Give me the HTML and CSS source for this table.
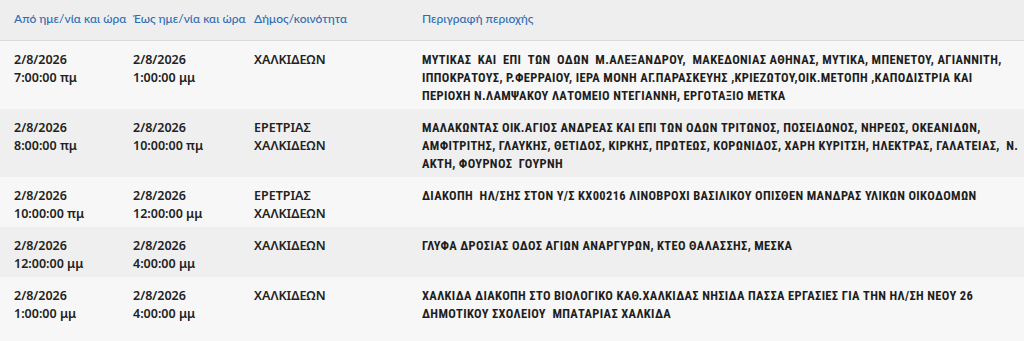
FILE: index.html
```html
<!DOCTYPE html>
<html lang="el">
<head>
<meta charset="utf-8">
<link rel="stylesheet" href="styles.css">
</head>
<body>
<div class="outages">
  <div class="row head">
    <div class="cell">Από ημε/νία και ώρα</div>
    <div class="cell">Έως ημε/νία και ώρα</div>
    <div class="cell">Δήμος/κοινότητα</div>
    <div class="cell">Περιγραφή περιοχής</div>
  </div>
  <div class="row odd">
    <div class="cell dt">2/8/2026<br>7:00:00 πμ</div>
    <div class="cell dt">2/8/2026<br>1:00:00 μμ</div>
    <div class="cell muni">ΧΑΛΚΙΔΕΩΝ</div>
    <div class="cell desc">ΜΥΤΙΚΑΣ&nbsp; ΚΑΙ&nbsp; ΕΠΙ&nbsp; ΤΩΝ&nbsp; ΟΔΩΝ&nbsp; Μ.ΑΛΕΞΑΝΔΡΟΥ,&nbsp; ΜΑΚΕΔΟΝΙΑΣ ΑΘΗΝΑΣ, ΜΥΤΙΚΑ, ΜΠΕΝΕΤΟΥ, ΑΓΙΑΝΝΙΤΗ, ΙΠΠΟΚΡΑΤΟΥΣ, Ρ.ΦΕΡΡΑΙΟΥ, ΙΕΡΑ ΜΟΝΗ ΑΓ.ΠΑΡΑΣΚΕΥΗΣ ,ΚΡΙΕΖΩΤΟΥ,ΟΙΚ.ΜΕΤΟΠΗ ,ΚΑΠΟΔΙΣΤΡΙΑ ΚΑΙ ΠΕΡΙΟΧΗ Ν.ΛΑΜΨΑΚΟΥ ΛΑΤΟΜΕΙΟ ΝΤΕΓΙΑΝΝΗ, ΕΡΓΟΤΑΞΙΟ ΜΕΤΚΑ</div>
  </div>
  <div class="row even">
    <div class="cell dt">2/8/2026<br>8:00:00 πμ</div>
    <div class="cell dt">2/8/2026<br>10:00:00 πμ</div>
    <div class="cell muni">ΕΡΕΤΡΙΑΣ<br>ΧΑΛΚΙΔΕΩΝ</div>
    <div class="cell desc">ΜΑΛΑΚΩΝΤΑΣ ΟΙΚ.ΑΓΙΟΣ ΑΝΔΡΕΑΣ ΚΑΙ ΕΠΙ ΤΩΝ ΟΔΩΝ ΤΡΙΤΩΝΟΣ, ΠΟΣΕΙΔΩΝΟΣ, ΝΗΡΕΩΣ, ΟΚΕΑΝΙΔΩΝ, ΑΜΦΙΤΡΙΤΗΣ, ΓΛΑΥΚΗΣ, ΘΕΤΙΔΟΣ, ΚΙΡΚΗΣ, ΠΡΩΤΕΩΣ, ΚΟΡΩΝΙΔΟΣ, ΧΑΡΗ ΚΥΡΙΤΣΗ, ΗΛΕΚΤΡΑΣ, ΓΑΛΑΤΕΙΑΣ,&nbsp; Ν. ΑΚΤΗ, ΦΟΥΡΝΟΣ&nbsp; ΓΟΥΡΝΗ</div>
  </div>
  <div class="row odd">
    <div class="cell dt">2/8/2026<br>10:00:00 πμ</div>
    <div class="cell dt">2/8/2026<br>12:00:00 μμ</div>
    <div class="cell muni">ΕΡΕΤΡΙΑΣ<br>ΧΑΛΚΙΔΕΩΝ</div>
    <div class="cell desc">ΔΙΑΚΟΠΗ&nbsp; ΗΛ/ΣΗΣ ΣΤΟΝ Υ/Σ ΚΧ00216 ΛΙΝΟΒΡΟΧΙ ΒΑΣΙΛΙΚΟΥ ΟΠΙΣΘΕΝ ΜΑΝΔΡΑΣ ΥΛΙΚΩΝ ΟΙΚΟΔΟΜΩΝ</div>
  </div>
  <div class="row even">
    <div class="cell dt">2/8/2026<br>12:00:00 μμ</div>
    <div class="cell dt">2/8/2026<br>4:00:00 μμ</div>
    <div class="cell muni">ΧΑΛΚΙΔΕΩΝ</div>
    <div class="cell desc">ΓΛΥΦΑ ΔΡΟΣΙΑΣ ΟΔΟΣ ΑΓΙΩΝ ΑΝΑΡΓΥΡΩΝ, ΚΤΕΟ ΘΑΛΑΣΣΗΣ, ΜΕΣΚΑ</div>
  </div>
  <div class="row odd">
    <div class="cell dt">2/8/2026<br>1:00:00 μμ</div>
    <div class="cell dt">2/8/2026<br>4:00:00 μμ</div>
    <div class="cell muni">ΧΑΛΚΙΔΕΩΝ</div>
    <div class="cell desc">ΧΑΛΚΙΔΑ ΔΙΑΚΟΠΗ ΣΤΟ ΒΙΟΛΟΓΙΚΟ ΚΑΘ.ΧΑΛΚΙΔΑΣ ΝΗΣΙΔΑ ΠΑΣΣΑ ΕΡΓΑΣΙΕΣ ΓΙΑ ΤΗΝ ΗΛ/ΣΗ ΝΕΟΥ 26 ΔΗΜΟΤΙΚΟΥ ΣΧΟΛΕΙΟΥ&nbsp; ΜΠΑΤΑΡΙΑΣ ΧΑΛΚΙΔΑ</div>
  </div>
</div>
</body>
</html>
```

FILE: styles.css
```css
html, body {
  margin: 0;
  padding: 0;
  background: #f7f7f7;
}

.outages {
  width: 1024px;
  font-family: "Noto Sans", "Open Sans", sans-serif;
  color: #222;
}

.row {
  display: grid;
  grid-template-columns: 119px 121px 168px 1fr;
  padding: 0 0 0 14px;
}

.head {
  height: 41px;
  align-items: center;
  background: #eeeeee;
  border-bottom: 1px solid #dadada;
  color: #2e6cb4;
  font-family: "Lato", "Open Sans", sans-serif;
  font-size: 12px;
  font-weight: 500;
  padding-bottom: 4px;
  box-sizing: border-box;
}

.odd { background: #f7f7f7; }
.even { background: #efefef; }

.row:not(.head) {
  padding-top: 10px;
  padding-bottom: 4px;
  line-height: 18px;
}

.dt, .muni {
  font-size: 12.5px;
  font-weight: 600;
  color: #222;
}

.desc {
  font-family: "Roboto", "DejaVu Sans Condensed", sans-serif;
  font-stretch: condensed;
  font-size: 12.5px;
  letter-spacing: 0.35px;
  font-weight: 700;
  color: #1e1e1e;
}
```
